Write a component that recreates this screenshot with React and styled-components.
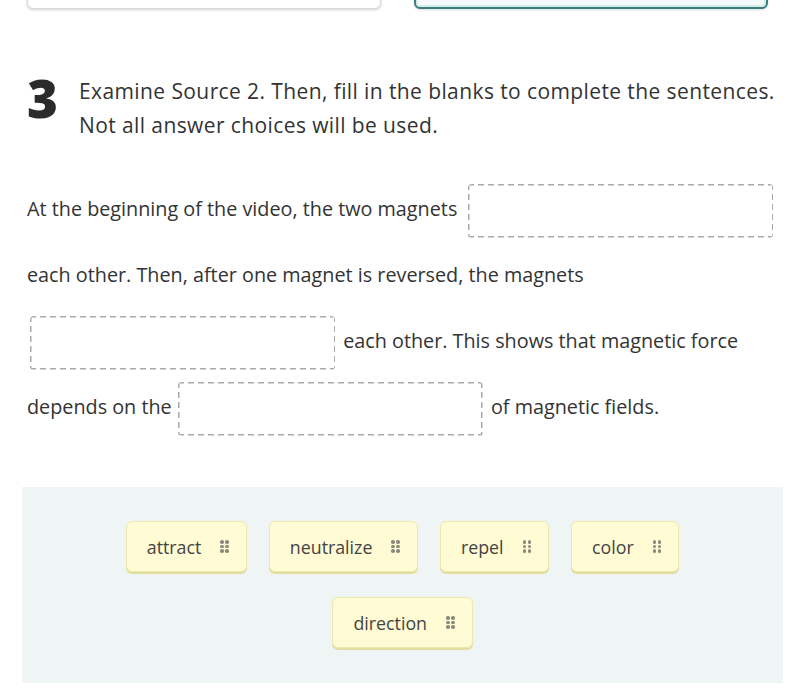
import React from 'react'
import styled, { createGlobalStyle } from 'styled-components'

const GlobalStyle = createGlobalStyle`
    body {
        margin: 0;
        background: #ffffff;
        font-family: "Open Sans", "Noto Sans", sans-serif;
        color: #333333;
    }
`

const choices = ['attract', 'neutralize', 'repel', 'color', 'direction']

const App = () => {
    return (
        <Page>
            <GlobalStyle />
            <CardStrip>
                <TopCard />
                <TopCard selected />
            </CardStrip>
            <Question>
                <Number>3</Number>
                <Prompt>
                    Examine Source 2. Then, fill in the blanks to complete the sentences.<br />
                    Not all answer choices will be used.
                </Prompt>
            </Question>
            <Sentences>
                At the beginning of the video, the two magnets <Blank $left={6} /><br />
                each other. Then, after one magnet is reversed, the magnets<br />
                <Blank /> each other. This shows that magnetic force<br />
                depends on the <Blank $left={1} /> of magnetic fields.
            </Sentences>
            <Bank>
                {choices.map((c) => (
                    <Chip key={c}>
                        {c}
                        <Grip>
                            {[0, 1, 2, 3, 4, 5].map((i) => <Dot key={i} />)}
                        </Grip>
                    </Chip>
                ))}
            </Bank>
        </Page>
    )
}

export default App

const Page = styled.div`
    width: 796px;
    height: 692px;
    overflow: hidden;
`

const CardStrip = styled.div`
    height: 12px;
    overflow: hidden;
    display: flex;
    align-items: flex-end;
    gap: 33px;
    padding-left: 27px;
`

const TopCard = styled.div`
    flex: none;
    width: 354px;
    height: 40px;
    margin-bottom: 3px;
    box-sizing: border-box;
    background: ${props => props.selected ? '#f4fbfa' : '#ffffff'};
    border: ${props => props.selected ? '2px solid #3d7f7e' : '1px solid #d8d8d8'};
    border-radius: 6px;
    box-shadow: ${props => props.selected
        ? 'inset 0 0 0 2px #d3ecea, 0 1px 2px rgba(0,0,0,.15)'
        : '0 1px 3px rgba(0,0,0,.18)'};
`

const Question = styled.div`
    display: flex;
    margin-top: 62px;
    padding-left: 27px;
`

const Number = styled.div`
    width: 52px;
    flex: none;
    font-size: 53px;
    font-weight: 800;
    line-height: 47px;
    color: #2b2b2b;
`

const Prompt = styled.p`
    margin: 0;
    font-size: 21px;
    letter-spacing: 0.4px;
    line-height: 34px;
    color: #333333;
    white-space: nowrap;
`

const Sentences = styled.p`
    margin: 34px 0 0 27px;
    font-size: 19.8px;
    line-height: 66px;
    color: #333333;
    white-space: nowrap;
`

const dash = '#a9a9a9'

const Blank = styled.span`
    display: inline-block;
    width: 305px;
    height: 54px;
    vertical-align: middle;
    margin: 0 3px 0 ${props => props.$left ?? 3}px;
    border-radius: 4px;
    background:
        repeating-linear-gradient(90deg, ${dash} 0 6px, transparent 6px 10px) left top / 100% 1.5px no-repeat,
        repeating-linear-gradient(90deg, ${dash} 0 6px, transparent 6px 10px) left bottom / 100% 1.5px no-repeat,
        repeating-linear-gradient(180deg, ${dash} 0 6px, transparent 6px 10px) left top / 1.5px 100% no-repeat,
        repeating-linear-gradient(180deg, ${dash} 0 6px, transparent 6px 10px) right top / 1.5px 100% no-repeat;
`

const Bank = styled.div`
    margin: 47px 13px 0 22px;
    background: #eff5f4;
    padding: 34px 80px 35px;
    display: flex;
    flex-wrap: wrap;
    justify-content: center;
    gap: 25px 22px;
`

const Chip = styled.div`
    display: flex;
    align-items: center;
    gap: 19px;
    height: 51px;
    box-sizing: border-box;
    padding: 0 17px 0 20px;
    background: #fffbd4;
    border: 1px solid #eee8ad;
    border-radius: 6px;
    box-shadow: 0 2px 0 #e4dda0;
    font-size: 17.8px;
    color: #444444;
`

const Grip = styled.div`
    display: grid;
    grid-template-columns: repeat(2, 3.5px);
    gap: 1px 1.5px;
`

const Dot = styled.span`
    width: 3.5px;
    height: 3.5px;
    border-radius: 50%;
    background: #8a8a7e;
`
